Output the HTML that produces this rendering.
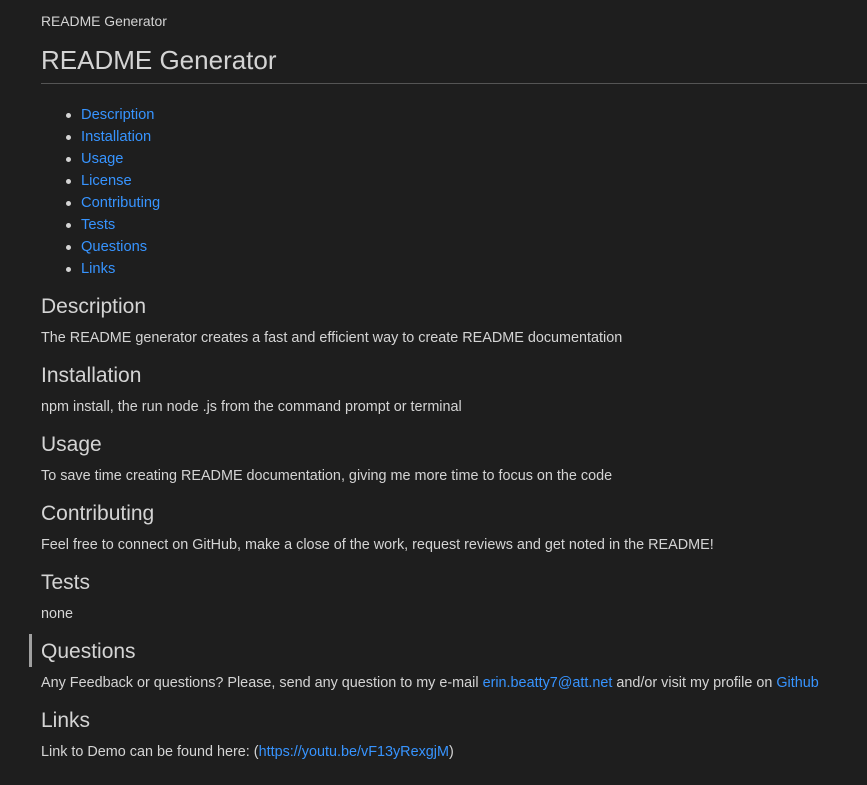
<!DOCTYPE html>
<html><head><meta charset="utf-8"><style>
html,body{margin:0;padding:0;background:#1e1e1e;width:867px;height:785px;overflow:hidden;font-family:"Liberation Sans",sans-serif;color:#d4d4d4}
.a{position:absolute;left:41px;white-space:nowrap}
a{color:#3794ff;text-decoration:none}
.h{font-size:21px;line-height:24px}
.p{font-size:14.4px;line-height:20px}
.li{position:absolute;left:81px;font-size:14.7px;line-height:20px;white-space:nowrap}
.li::before{content:"";position:absolute;left:-15px;top:8px;width:5px;height:5px;border-radius:50%;background:#d4d4d4}
</style></head><body>
<div class="a" style="top:12px;font-size:13.9px;line-height:18px">README Generator</div>
<div class="a" style="top:43px;font-size:26px;line-height:34px">README Generator</div>
<div style="position:absolute;left:41px;right:0;top:83px;height:1px;background:#555"></div>
<div class="li" style="top:105px"><a>Description</a></div>
<div class="li" style="top:127px"><a>Installation</a></div>
<div class="li" style="top:149px"><a>Usage</a></div>
<div class="li" style="top:171px"><a>License</a></div>
<div class="li" style="top:193px"><a>Contributing</a></div>
<div class="li" style="top:215px"><a>Tests</a></div>
<div class="li" style="top:237px"><a>Questions</a></div>
<div class="li" style="top:259px"><a>Links</a></div>
<div class="a h" style="top:295px">Description</div>
<div class="a p" style="top:328px">The README generator creates a fast and efficient way to create README documentation</div>
<div class="a h" style="top:364px">Installation</div>
<div class="a p" style="top:397px">npm install, the run node .js from the command prompt or terminal</div>
<div class="a h" style="top:433px">Usage</div>
<div class="a p" style="top:466px">To save time creating README documentation, giving me more time to focus on the code</div>
<div class="a h" style="top:502px">Contributing</div>
<div class="a p" style="top:535px">Feel free to connect on GitHub, make a close of the work, request reviews and get noted in the README!</div>
<div class="a h" style="top:571px">Tests</div>
<div class="a p" style="top:604px">none</div>
<div style="position:absolute;left:29px;top:634px;width:3px;height:33px;background:#a0a0a0"></div>
<div class="a h" style="top:640px">Questions</div>
<div class="a p" style="top:673px">Any Feedback or questions? Please, send any question to my e-mail <a>erin.beatty7@att.net</a> and/or visit my profile on <a>Github</a></div>
<div class="a h" style="top:709px">Links</div>
<div class="a p" style="top:742px">Link to Demo can be found here: (<a>https://youtu.be/vF13yRexgjM</a>)</div>
</body></html>
